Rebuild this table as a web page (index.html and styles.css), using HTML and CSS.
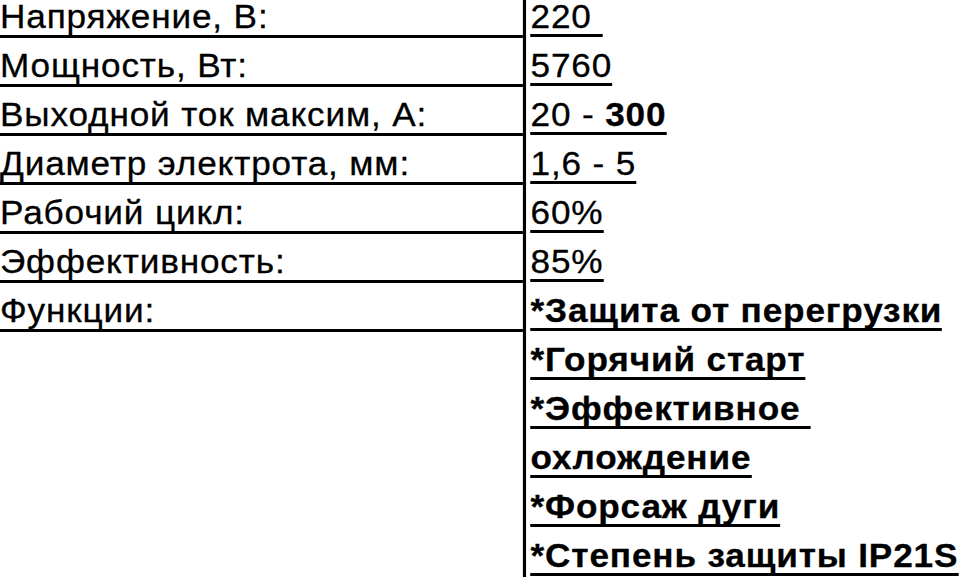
FILE: index.html
```html
<!DOCTYPE html>
<html lang="ru">
<head>
<meta charset="utf-8">
<title>Характеристики</title>
<link rel="stylesheet" href="styles.css">
</head>
<body>
<div class="sheet">
  <div class="row"><div class="label">Напряжение, В:</div><div class="value"><span class="u">220&nbsp;</span></div></div>
  <div class="row"><div class="label">Мощность, Вт:</div><div class="value"><span class="u">5760</span></div></div>
  <div class="row"><div class="label">Выходной ток максим, А:</div><div class="value"><span class="u">20 - <b>300</b></span></div></div>
  <div class="row"><div class="label">Диаметр электрота, мм:</div><div class="value"><span class="u">1,6 - 5</span></div></div>
  <div class="row"><div class="label">Рабочий цикл:</div><div class="value"><span class="u">60%</span></div></div>
  <div class="row"><div class="label">Эффективность:</div><div class="value"><span class="u">85%</span></div></div>
  <div class="row"><div class="label">Функции:</div><div class="value"><span class="u b">*Защита от перегрузки</span></div></div>
  <div class="row"><div class="label empty"></div><div class="value"><span class="u b">*Горячий старт</span></div></div>
  <div class="row"><div class="label empty"></div><div class="value"><span class="u b">*Эффективное&nbsp;</span></div></div>
  <div class="row"><div class="label empty"></div><div class="value"><span class="u b">охлождение</span></div></div>
  <div class="row"><div class="label empty"></div><div class="value"><span class="u b">*Форсаж дуги</span></div></div>
  <div class="row"><div class="label empty"></div><div class="value"><span class="u b">*Степень защиты IP21S</span></div></div>
</div>
</body>
</html>
```

FILE: styles.css
```css
html, body {
  margin: 0;
  padding: 0;
  background: #fff;
  overflow: hidden;
}

.sheet {
  width: 922px;
  margin-top: -11.5px;
  transform: scaleX(1.05);
  transform-origin: 0 0;
  font-family: "Liberation Sans", Arial, sans-serif;
  font-size: 33.5px;
  line-height: 33.5px;
  letter-spacing: 0.8px;
  color: #000;
  -webkit-text-stroke: 0.3px #000;
}

.row {
  display: flex;
  height: 49px;
}

.label {
  box-sizing: border-box;
  width: 498px;
  height: 49px;
  padding-top: 11.6px;
  border-bottom: 3.5px solid #000;
  white-space: nowrap;
}

.label.empty {
  border-bottom: none;
}

.value {
  box-sizing: border-box;
  flex: 1;
  height: 49px;
  padding-top: 11.6px;
  padding-left: 4.3px;
  border-left: 3.8px solid #000;
  white-space: nowrap;
}

.u {
  display: inline-block;
  line-height: 33.5px;
  border-bottom: 3.5px solid #000;
}

.b {
  font-weight: bold;
}
```
